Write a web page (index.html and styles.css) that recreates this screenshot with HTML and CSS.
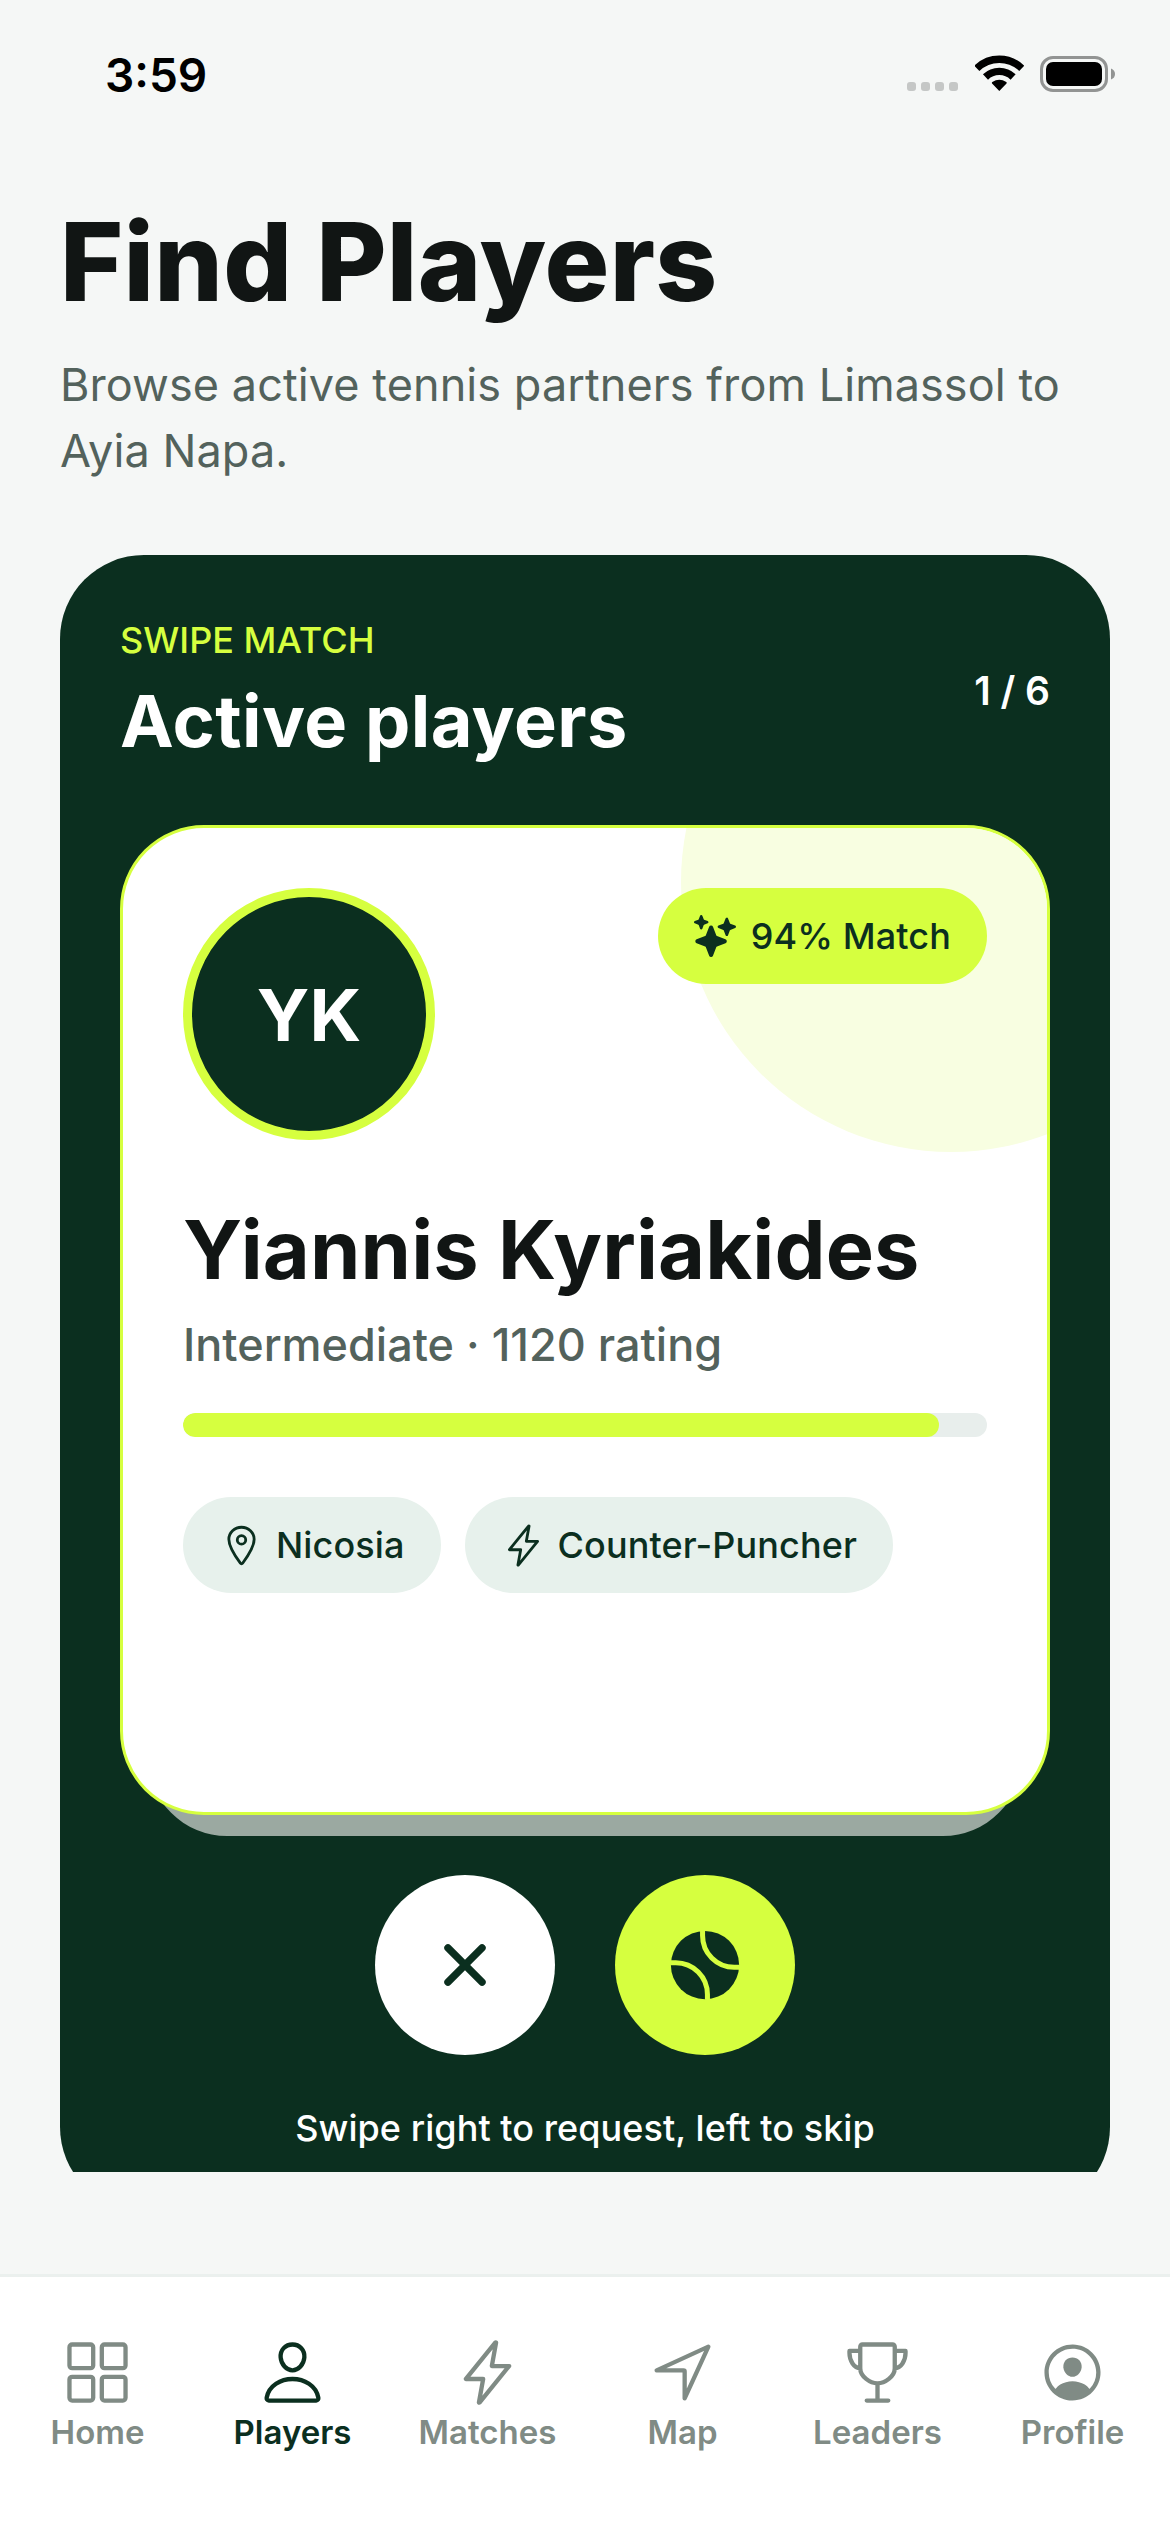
FILE: index.html
```html
<!DOCTYPE html>
<html lang="en">
<head>
<meta charset="utf-8">
<title>Find Players</title>
<link rel="stylesheet" href="styles.css">
</head>
<body>
<div class="screen">
  <header class="status">
    <span class="clock">3:59</span>
    <div class="status-icons">
      <div class="dots"><i></i><i></i><i></i><i></i></div>
      <svg class="wifi" viewBox="0 0 146 108">
        <g fill="none" stroke="#000" stroke-width="22">
          <path d="M5.500 40A97 97 0 0 1 140.500 40"/>
          <path d="M31.500 66A60 60 0 0 1 114.500 66"/>
        </g>
        <path d="M73 108L52 86C50 84 50 83 52 81Q73 68 94 81C96 83 96 84 94 86Z"/>
      </svg>
      <svg class="battery" viewBox="0 0 75 36">
        <rect x="1.500" y="1.500" width="65" height="33" rx="11.500" fill="none" stroke="#929493" stroke-width="3"/>
        <rect x="6" y="6" width="56" height="24" rx="7"/>
        <path d="M71 12.500Q75 14 75 18T71 23.500Z" fill="#929493"/>
      </svg>
    </div>
  </header>

  <main class="content">
    <h1>Find Players</h1>
    <p class="lead">Browse active tennis partners from Limassol to Ayia Napa.</p>

    <section class="panel">
      <div class="panel-head">
        <div>
          <div class="eyebrow">SWIPE MATCH</div>
          <h2>Active players</h2>
        </div>
        <span class="counter">1 / 6</span>
      </div>

      <div class="deck">
        <div class="card-behind"></div>
        <article class="card">
          <div class="glow"></div>
          <div class="card-top">
            <div class="avatar">YK</div>
            <div class="pill match">
              <svg viewBox="0 0 512 512"><path d="M208 512a24.840 24.840 0 01-23.340-16l-39.840-103.600a16.060 16.060 0 00-9.190-9.190L32 343.340a25 25 0 010-46.680l103.600-39.840a16.060 16.060 0 009.190-9.190L184.660 144a25 25 0 0146.680 0l39.840 103.600a16.060 16.060 0 009.190 9.190l103 39.630a25.490 25.490 0 0116.630 24.100 24.820 24.820 0 01-16 22.820l-103.600 39.840a16.060 16.060 0 00-9.190 9.190L231.340 496A24.840 24.840 0 01208 512zM88 176a14.670 14.670 0 01-13.690-9.400l-16.860-43.840a7.280 7.280 0 00-4.210-4.210L9.400 101.690a14.670 14.670 0 010-27.380l43.840-16.860a7.310 7.310 0 004.210-4.210L74.160 9.790A15 15 0 0186.230.110a14.670 14.670 0 0115.460 9.290l16.860 43.840a7.310 7.310 0 004.210 4.210l43.840 16.860a14.670 14.670 0 010 27.380l-43.840 16.860a7.280 7.280 0 00-4.210 4.210l-16.860 43.840A14.670 14.670 0 0188 176zM400 256a16 16 0 01-14.930-10.260l-22.840-59.370a8 8 0 00-4.600-4.600l-59.370-22.840a16 16 0 010-29.860l59.370-22.840a8 8 0 004.600-4.600l22.670-58.950a16.450 16.450 0 0113.170-10.570 16 16 0 0116.860 10.150l22.840 59.370a8 8 0 004.600 4.600l59.370 22.840a16 16 0 010 29.860l-59.370 22.840a8 8 0 00-4.600 4.600l-22.840 59.370A16 16 0 01400 256z"/></svg>
              <span>94% Match</span>
            </div>
          </div>
          <h3>Yiannis Kyriakides</h3>
          <p class="rating">Intermediate · 1120 rating</p>
          <div class="track"><div class="fill" style="width:94%"></div></div>
          <div class="chips">
            <div class="pill chip">
              <svg class="line" viewBox="0 0 512 512"><path d="M256 48c-79.500 0-144 61.390-144 137 0 87 96 224.870 131.250 272.490a15.770 15.770 0 0025.500 0C304 409.890 400 272.070 400 185c0-75.610-64.500-137-144-137z"/><circle cx="256" cy="192" r="48"/></svg>
              <span>Nicosia</span>
            </div>
            <div class="pill chip">
              <svg class="line" viewBox="0 0 512 512"><path d="M315.270 33L96 304h128l-31.510 173.230a2.360 2.360 0 002.330 2.770h0a2.360 2.360 0 001.890-.950L416 208H288l31.660-173.250a2.450 2.450 0 00-2.440-2.750h0a2.420 2.420 0 00-1.950 1z"/></svg>
              <span>Counter-Puncher</span>
            </div>
          </div>
        </article>
      </div>

      <div class="actions">
        <div class="action skip">
          <svg viewBox="0 0 512 512"><path d="M289.940 256l95-95A24 24 0 00351 127l-95 95-95-95a24 24 0 00-34 34l95 95-95 95a24 24 0 1034 34l95-95 95 95a24 24 0 0034-34z"/></svg>
        </div>
        <div class="action request">
          <svg viewBox="0 0 512 512"><circle cx="256" cy="256" r="224"/><path class="seam" d="M240 28V62A208 208 0 0 0 448 271H484M28 241H64A208 208 0 0 1 272 450V484"/></svg>
        </div>
      </div>
      <p class="hint">Swipe right to request, left to skip</p>
    </section>
  </main>

  <nav class="tabs">
    <div class="tab">
      <svg class="line" viewBox="0 0 512 512"><rect x="48" y="48" width="176" height="176" rx="20"/><rect x="288" y="48" width="176" height="176" rx="20"/><rect x="48" y="288" width="176" height="176" rx="20"/><rect x="288" y="288" width="176" height="176" rx="20"/></svg>
      <span>Home</span>
    </div>
    <div class="tab active">
      <svg class="line" viewBox="0 0 512 512"><path d="M344 144c-3.920 52.870-44 96-88 96s-84.150-43.120-88-96c-4-55 35-96 88-96s92 42 88 96z"/><path d="M256 304c-87 0-175.300 48-191.640 138.600C62.390 453.520 68.570 464 80 464h352c11.440 0 17.620-10.480 15.650-21.400C431.300 352 343 304 256 304z"/></svg>
      <span>Players</span>
    </div>
    <div class="tab">
      <svg class="line" viewBox="0 0 512 512"><path d="M315.270 33L96 304h128l-31.510 173.230a2.360 2.360 0 002.330 2.770h0a2.360 2.360 0 001.890-.950L416 208H288l31.660-173.250a2.450 2.450 0 00-2.440-2.750h0a2.420 2.420 0 00-1.950 1z"/></svg>
      <span>Matches</span>
    </div>
    <div class="tab">
      <svg class="line" viewBox="0 0 512 512"><path d="M448 64L64 240.140h200a8 8 0 018 8V448z"/></svg>
      <span>Map</span>
    </div>
    <div class="tab">
      <svg class="line" viewBox="0 0 512 512"><path d="M176 464h160M256 464V336M384 224V64a16 16 0 00-16-16H144a16 16 0 00-16 16V224c0 62 73.600 112 128 112s128-50 128-112zM128 96H48v16c0 55.220 33.550 112 80 112M384 96h80v16c0 55.220-33.550 112-80 112"/></svg>
      <span>Leaders</span>
    </div>
    <div class="tab">
      <svg viewBox="0 0 512 512"><path d="M258.900 48C141.920 46.420 46.420 141.920 48 258.900c1.560 112.190 92.910 203.540 205.100 205.100 117 1.600 212.480-93.900 210.880-210.880C462.440 140.910 371.090 49.560 258.900 48zM385.320 375.250a4 4 0 01-6.140-.320 124.270 124.270 0 00-32.350-29.590C321.370 329 289.110 320 256 320s-65.370 9-90.830 25.340a124.240 124.240 0 00-32.350 29.580 4 4 0 01-6.140.320A175.320 175.320 0 0180 259c-1.630-97.310 78.220-178.760 175.570-179S432 158.810 432 256a175.320 175.320 0 01-46.680 119.250z"/><path d="M256 144c-19.720 0-37.550 7.390-50.220 20.820s-19 32-17.570 51.930C191.110 256 221.520 288 256 288s64.830-32 67.790-71.240c1.480-19.740-4.800-38.140-17.680-51.820C293.390 151.440 275.590 144 256 144z"/></svg>
      <span>Profile</span>
    </div>
  </nav>
</div>
</body>
</html>
```

FILE: styles.css
```css
* { box-sizing: border-box; margin: 0; padding: 0; }

body {
  font-family: Inter, "Liberation Sans", sans-serif;
  background: #f5f7f6;
  color: #111514;
}

.screen {
  width: 1170px;
  height: 2532px;
  display: flex;
  flex-direction: column;
  overflow: hidden;
}

svg { display: block; flex: none; fill: currentColor; }
.line { fill: none; stroke: currentColor; stroke-width: 32; stroke-linecap: round; stroke-linejoin: round; }

/* Status bar */
.status {
  height: 141px;
  flex: none;
  display: flex;
  justify-content: space-between;
  align-items: flex-start;
  padding: 46px 55px 0 105px;
  color: #000;
}
.clock { font-size: 46px; line-height: 58px; font-weight: 600; }
.status-icons { display: flex; align-items: flex-end; height: 46px; }
.dots { display: flex; gap: 5px; margin-right: 17px; padding-bottom: 1px; }
.dots i { width: 9px; height: 9px; border-radius: 3px; background: #c5c7c6; }
.wifi { width: 48.600px; height: 36px; margin-right: 16.400px; margin-bottom: 1px; }
.battery { width: 75px; height: 36px; }

/* Scrolling content, cut off above the tab bar */
.content {
  height: 2031px;
  flex: none;
  overflow: hidden;
  padding: 55px 60px 0;
}
h1 { font-size: 108px; line-height: 132px; font-weight: 800; letter-spacing: 0.250px; }
.lead {
  margin-top: 24px;
  font-size: 45px;
  line-height: 66px;
  letter-spacing: 0.080px;
  color: #53625c;
}

.panel {
  margin-top: 71px;
  height: 1656px;
  border-radius: 84px;
  background: #0b2f1f;
  color: #fff;
  padding: 60px;
}
.panel-head {
  height: 152px;
  display: flex;
  justify-content: space-between;
  align-items: center;
}
.eyebrow { font-size: 36px; line-height: 48px; font-weight: 500; color: #d6ff3f; }
h2 { margin-top: 12px; font-size: 72px; line-height: 90px; font-weight: 700; letter-spacing: 0.400px; }
.counter { font-size: 39px; line-height: 48px; font-weight: 600; }

/* Card stack */
.deck { position: relative; height: 990px; margin-top: 58px; }
.card-behind {
  position: absolute;
  left: 28px;
  right: 28px;
  bottom: -21px;
  height: 930px;
  border-radius: 79px;
  background: #9ba9a1;
}
.card {
  position: relative;
  height: 990px;
  border: 3px solid #d6ff3f;
  border-radius: 84px;
  background: #fff;
  color: #111514;
  padding: 60px;
  overflow: hidden;
}
.glow {
  position: absolute;
  left: 558px;
  top: -216px;
  width: 540px;
  height: 540px;
  border-radius: 50%;
  background: #f8fee1;
}
.card-top {
  position: relative;
  display: flex;
  justify-content: space-between;
  align-items: flex-start;
}
.avatar {
  width: 252px;
  height: 252px;
  border: 9px solid #d6ff3f;
  border-radius: 50%;
  background: #0b2f1f;
  color: #fff;
  display: flex;
  align-items: center;
  justify-content: center;
  font-size: 72px;
  font-weight: 700;
}
.pill {
  height: 96px;
  border-radius: 48px;
  padding: 0 36px;
  display: flex;
  align-items: center;
  gap: 12px;
  font-size: 36px;
  font-weight: 500;
  letter-spacing: 0.120px;
  color: #0b2f1f;
}
.match { background: #d6ff3f; gap: 15px; }
.match svg { width: 42px; height: 42px; }
h3 { margin-top: 59px; font-size: 81px; line-height: 102px; font-weight: 700; letter-spacing: 0.150px; }
.rating { margin-top: 12px; font-size: 45px; line-height: 63px; font-weight: 500; color: #53625c; }
.track { margin-top: 37px; height: 24px; border-radius: 12px; background: #e8eeec; overflow: hidden; }
.fill { height: 24px; border-radius: 12px; background: #d6ff3f; }
.chips { display: flex; gap: 24px; margin-top: 60px; }
.chip { background: #e7f1ec; }
.chip svg { width: 45px; height: 45px; }

.actions { display: flex; justify-content: center; gap: 60px; margin-top: 60px; }
.action {
  width: 180px;
  height: 180px;
  border-radius: 50%;
  display: flex;
  align-items: center;
  justify-content: center;
  color: #0b2f1f;
}
.action svg { width: 78px; height: 78px; }
.skip { background: #fff; }
.request { background: #d6ff3f; }
.seam { fill: none; stroke: #d6ff3f; stroke-width: 33; }
.hint { margin-top: 49px; text-align: center; font-size: 36px; line-height: 48px; font-weight: 500; letter-spacing: 0.060px; }

/* Tab bar */
.tabs {
  margin-top: 102px;
  flex: 1;
  border-top: 3px solid #ebf0ee;
  background: #fff;
  display: grid;
  grid-template-columns: repeat(6, 1fr);
  padding-top: 61px;
}
.tab {
  display: flex;
  flex-direction: column;
  align-items: center;
  gap: 5px;
  color: #808b85;
  font-size: 33px;
  line-height: 40px;
  font-weight: 600;
}
.tab svg { width: 69px; height: 69px; }
.active { color: #0b2f1f; }
```
